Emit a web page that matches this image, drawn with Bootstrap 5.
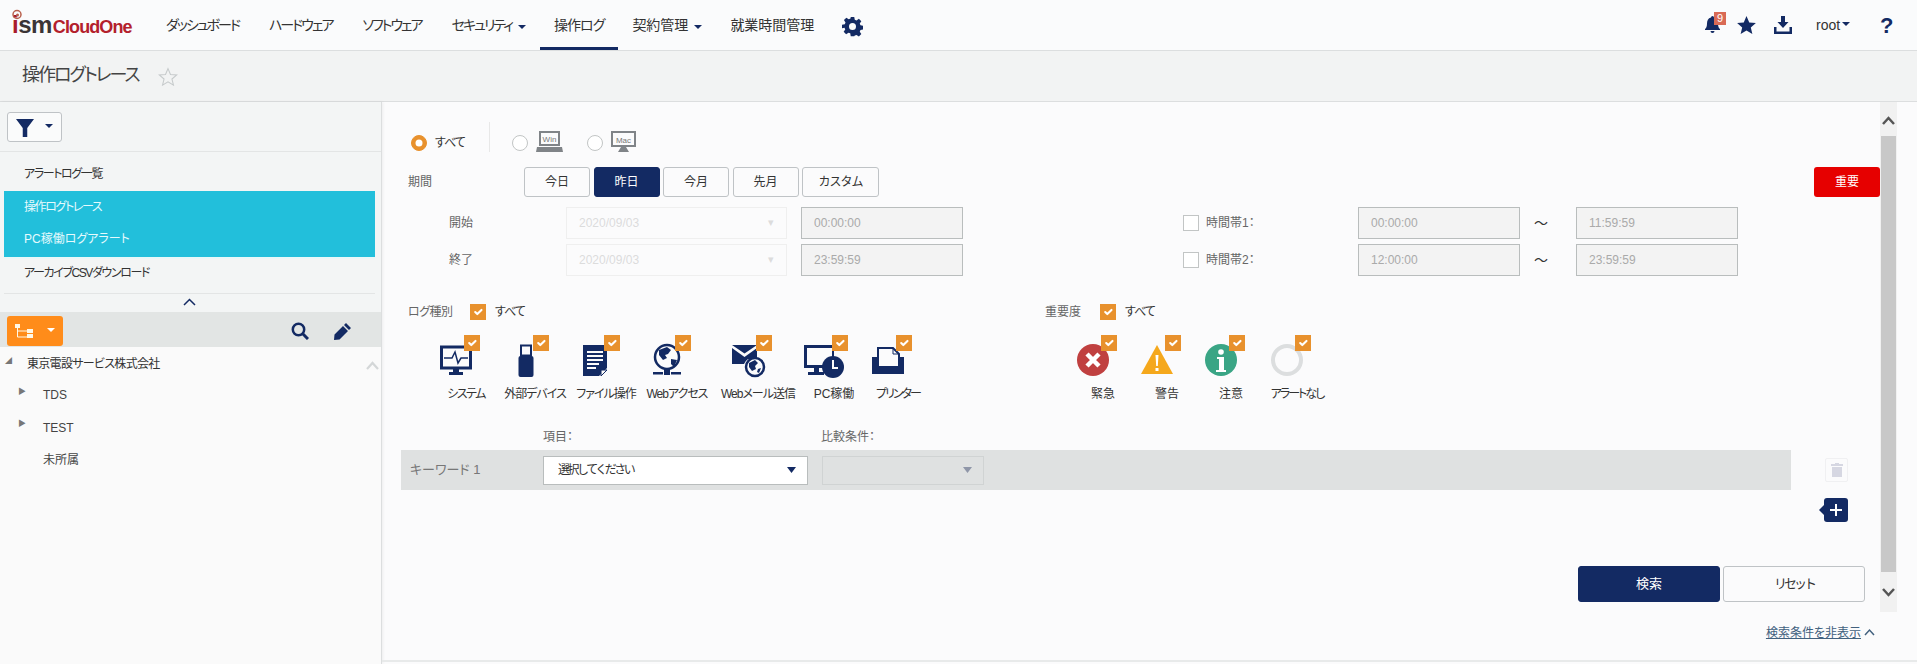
<!DOCTYPE html>
<html lang="ja">
<head>
    <meta charset="UTF-8">
    <meta name="viewport" content="width=device-width, initial-scale=1.0">
    <title>操作ログトレース</title>
    <link href="https://cdn.jsdelivr.net/npm/bootstrap@5.3.0/dist/css/bootstrap.min.css" rel="stylesheet">
    <style>
        body {
            font-family: "Liberation Sans", "Noto Sans CJK JP", sans-serif;
            font-feature-settings: "palt";
            font-size: 12px;
            color: #333;
            background: #fbfbfc;
            height: 664px;
            overflow: hidden;
        }
        /* カナの字詰め */
        .ls-05 { letter-spacing: -.5px; }
        .ls-1 { letter-spacing: -1px; }
        .ls-15 { letter-spacing: -1.5px; }
        .ls-2 { letter-spacing: -2px; }
        .ls-25 { letter-spacing: -2.5px; }
        .ls-3 { letter-spacing: -3px; }
        /* ヘッダー */
        .top-bar { height: 51px; padding: 0; background: #fafbfc; border-bottom: 1px solid #dcdedf; }
        .logo-box { width: 152px; flex: none; padding-left: 12px; height: 50px; position: relative; }
        .logo-ism { font-size: 24px; font-weight: 700; color: #3a3436; letter-spacing: -.5px; line-height: 50px; }
        .logo-ism b { color: #a81c2c; }
        .logo-cloud { font-size: 18px; font-weight: 700; color: #b3202c; line-height: 50px; margin: 2px 0 0 1px; letter-spacing: -.9px; }
        .logo-swirl { position: absolute; left: 12px; top: 9px; }
        .top-bar .navbar-nav .nav-link { height: 50px; padding: 0 14px; line-height: 50px; font-size: 14px; color: #333; }
        .top-bar .navbar-nav .nav-link.active { border-bottom: 3px solid #132a63; }
        .top-bar .navbar-nav .nav-link.ls-2 { margin-right: 2px; }
        .top-bar .navbar-nav .nav-link.dropdown-toggle { margin-right: 0; }
        .top-bar .nav-link.dropdown-toggle::after { color: #132a63; margin-left: 6px; vertical-align: .1em; }
        .right-tools { height: 50px; }
        .tool-bell { position: relative; width: 32px; display: block; }
        .bell-count { position: absolute; left: 9px; top: -4px; width: 12px; height: 13px; background: #d96a55; color: #fff; font-size: 11px; line-height: 13px; text-align: center; }
        .tool-star { margin-right: 18px; }
        .tool-down { margin-right: 24px; }
        .root-user { font-size: 14px; color: #333; width: 64px; }
        .root-user::after { color: #132a63; margin-left: 2px; }
        .help-mark { font-size: 22px; font-weight: 700; color: #132a63; width: 37px; }
        /* タイトル */
        .title-bar { height: 51px; background: #f2f3f3; border-bottom: 1px solid #dcdedf; padding-left: 22px; }
        .title-bar h1 { font-size: 18px; font-weight: 400; margin: 0 19px 0 0; color: #444; letter-spacing: -2px; }
        /* 左メニュー */
        .side-col { width: 382px; flex: none; height: 562px; background: #fafafa; border-right: 1px solid #dcdedf; box-shadow: 1px 0 3px rgba(0,0,0,.06); }
        .side-top { background: #f3f5f5; height: 210px; padding: 0 6px 0 4px; }
        .filter-row { height: 50px; border-bottom: 1px solid #e3e5e5; margin-left: -4px; margin-right: -6px; padding: 10px 0 0 7px; }
        .filter-btn { width: 55px; height: 30px; padding: 0; background: #fafbfb; border: 1px solid #bfc3c6; border-radius: 3px; color: #132a63; }
        .side-list { padding-top: 6px; }
        .side-list .list-group-item { height: 33.5px; line-height: 33.5px; padding: 0 0 0 20px; border: 0; background: transparent; font-size: 12px; color: #333; letter-spacing: -1.4px; }
        .side-list .list-group-item.active { background: #22bfdb; color: #e6fafd; }
        .side-list .list-group-item.pc-item { letter-spacing: 0; box-shadow: 0 2px 0 #e8f8f8; }
        .collapse-row { height: 17px; border-top: 1px solid #e3e5e5; margin-top: 3px; text-align: center; line-height: 14px; }
        .tree-tools { height: 35px; background: #e2e5e4; padding: 3px 30px 0 7px; }
        .org-btn { width: 56px; height: 30px; background: #ff8c1a; border: 0; border-radius: 3px; padding: 0; color: #fff; }
        .org-btn.dropdown-toggle::after { margin-left: 10px; }
        .filter-btn.dropdown-toggle::after { margin-left: 7px; }
        .tool-find { margin-right: 25px; }
        .tree-box { position: relative; padding-top: 1px; }
        .tree-row { height: 32.5px; font-size: 12px; color: #444; display: flex; align-items: center; }
        .tree-arrow { flex: none; color: #777; font-size: 8px; line-height: 1; margin-top: -7px; }
        .tree-top { height: 31px; padding-left: 5px; color: #333; letter-spacing: -.7px; }
        .tree-top .tree-arrow { width: 22px; font-size: 7px; }
        .tree-sub { padding-left: 18px; }
        .tree-sub .tree-arrow { width: 25px; }
        .tree-up { position: absolute; right: 2px; top: 14px; }
        /* 検索フォーム */
        .form-wrap { padding-right: 20px; }
        .form-side { flex: 1 1 auto; height: 510px; padding: 20px 0 0 26px; min-width: 0; }
        .scroll-col { width: 17px; flex: none; height: 510px; background: #f1f1f1; }
        .scroll-btn { height: 34px; padding-top: 14px; }
        .scroll-btn.down { height: 40px; padding-top: 16px; }
        .scroll-thumb { height: 436px; background: #c8c8c8; margin: 0 1px; }
        .radio-row { height: 30px; }
        .radio-row .form-check-input { margin-bottom: 1px; }
        .radio-row .radio-all { margin-left: 3px; }
        .form-check-input { margin: 0; flex: none; width: 16px; height: 16px; }
        .form-check-input:checked { background-color: #e8912d; border-color: #e8912d; }
        .form-check-input[type=checkbox] { border-radius: 0; }
        .check-off { border-color: #c2c5c5; }
        .radio-sep { width: 1px; height: 30px; background: #e8e8e8; margin: 0 22px 0 24px; }
        .win-mark { margin-left: 8px; margin-right: 24px; }
        .mac-mark { margin-left: 8px; }
        .period-row { margin-top: 15px; height: 30px; }
        .row-label { color: #666; font-size: 12px; }
        .w-period { width: 116px; }
        .period-btn { width: 66px; height: 30px; padding: 0; font-size: 12px; background: #fbfbfc; color: #333; border: 1px solid #bfc3c6; border-radius: 3px; margin-right: 3.5px; }
        .period-btn.wide { width: 77px; }
        .period-btn.on, .period-btn.on:hover { background: #132a63; color: #fff; border-color: #132a63; }
        .imp-btn { width: 66px; height: 30px; padding: 0; font-size: 12px; background: #e60000; border: 0; color: #fff; border-radius: 3px; margin-left: auto; }
        .date-row { height: 32px; margin-top: 10px; }
        .date-row.second { margin-top: 5px; }
        .date-left { width: 775px; flex: none; padding-left: 41px; }
        .w-range { width: 117px; }
        .date-box { width: 221px; height: 32px; flex: none; border: 1px solid #efefef; color: #dcdcdc; padding: 0 12px; margin-right: 14px; font-size: 12px; background: transparent; }
        .time-box { width: 162px; height: 32px; flex: none; border: 1px solid #b9bdbd; border-radius: 0; background: #f3f3f3; color: #aaa; font-size: 12px; padding: 0 12px; }
        .time-box:disabled { background: #f3f3f3; color: #aaa; }
        .w-band { width: 159px; padding-left: 7px; }
        .tilde { width: 56px; padding-left: 14px; font-size: 14px; }
        .kind-head { margin-top: 28px; height: 16px; }
        .kind-left { width: 637px; flex: none; }
        .w-kind { width: 62px; }
        .w-sev { width: 55px; }
        .all-label { margin-left: 9px; }
        .icon-row { margin-top: 24px; }
        .icon-left { width: 663px; flex: none; padding-left: 28px; }
        .pick { text-align: center; }
        .pick-icon { position: relative; width: 32px; height: 32px; margin: 0 auto; left: -10px; }
        .pick-icon svg { display: block; overflow: visible; }
        .pick-icon svg.pc-mark { margin-left: -4px; }
        .pick-icon .form-check-input { position: absolute; left: 24px; top: -9px; }
        .pick-name { margin-top: 9px; line-height: 18px; white-space: nowrap; color: #333; }
        .w60 { width: 60px; } .w78 { width: 78px; } .w64 { width: 64px; } .w84 { width: 84px; } .w68 { width: 68px; }
        .word-head { margin-top: 25px; height: 18px; line-height: 18px; padding-left: 135px; color: #666; }
        .word-head span:first-child { width: 278px; }
        .word-line { margin-top: 4px; margin-left: -7px; }
        .word-band { width: 1390px; height: 40px; background: #dfe1e1; padding-left: 9px; color: #777; font-size: 13px; }
        .word-name { width: 133px; }
        .pick-select { width: 265px; height: 29px; padding: 0 14px; border: 1px solid #b9bdbd; border-radius: 0; font-size: 12px; letter-spacing: -2.5px; color: #333; background-color: #fff; background-size: 9px 6px; background-position: right 11px center; background-repeat: no-repeat; background-image: url("data:image/svg+xml,%3csvg xmlns='http://www.w3.org/2000/svg' viewBox='0 0 9 6'%3e%3cpath fill='%23132a63' d='M0 0h9L4.500 6z'/%3e%3c/svg%3e"); margin-right: 14px; }
        .pick-select.off { width: 162px; background-color: #dfe1e1; border-color: #d0d3d3; background-image: url("data:image/svg+xml,%3csvg xmlns='http://www.w3.org/2000/svg' viewBox='0 0 9 6'%3e%3cpath fill='%238f96a8' d='M0 0h9L4.500 6z'/%3e%3c/svg%3e"); }
        .trash-btn { width: 23px; height: 24px; margin-left: 34px; padding: 0; background: #fbfbfc; border: 1px solid #f0f0f2; border-radius: 2px; }
        .add-line { margin-top: 8px; padding-right: 32px; }
        .add-btn { position: relative; width: 24px; height: 24px; padding: 0; background: #132a63; border: 0; border-radius: 3px; }
        .add-btn::before { content: ""; position: absolute; left: -5px; top: 7px; border: 5px solid transparent; border-left: 0; border-right-color: #132a63; }
        .submit-line { margin-top: 44px; padding-right: 15px; gap: 3px; }
        .submit-btn { width: 142px; height: 36px; padding: 0; font-size: 13px; border-radius: 3px; }
        .submit-btn.go { background: #132a63; color: #fff; border: 1px solid #132a63; }
        .submit-btn.reset { background: #fbfbfc; color: #333; border: 1px solid #bfc3c6; }
        .hide-line { height: 50px; padding: 12px 42px 0 0; border-bottom: 2px solid #e8eaea; }
        .hide-line a { color: #41607e; font-size: 12px; line-height: 18px; }
        .hide-line svg { margin-left: 3px; }
    </style>
</head>
<body>

    <!-- ヘッダー -->
    <nav class="navbar navbar-expand top-bar">
        <div class="logo-box d-flex">
            <svg class="logo-swirl" width="12" height="11" viewBox="0 0 12 11"><circle cx="5" cy="5.500" r="4" fill="none" stroke="#b8604c" stroke-width="1.500"/><circle cx="5.500" cy="6" r="1.500" fill="#b8604c"/></svg>
            <span class="logo-ism"><b>i</b>sm</span><span class="logo-cloud">CloudOne</span>
        </div>
        <ul class="navbar-nav">
            <li class="nav-item"><a class="nav-link ls-2" href="#">ダッシュボード</a></li>
            <li class="nav-item"><a class="nav-link ls-2" href="#">ハードウェア</a></li>
            <li class="nav-item"><a class="nav-link ls-2" href="#">ソフトウェア</a></li>
            <li class="nav-item"><a class="nav-link ls-2 dropdown-toggle" href="#">セキュリティ</a></li>
            <li class="nav-item"><a class="nav-link ls-1 active" href="#">操作ログ</a></li>
            <li class="nav-item"><a class="nav-link dropdown-toggle" href="#">契約管理</a></li>
            <li class="nav-item"><a class="nav-link" href="#">就業時間管理</a></li>
            <li class="nav-item">
                <a class="nav-link" href="#" aria-label="設定">
                    <svg width="21" height="21" viewBox="0 0 24 24" fill="#132a63"><path d="M10 1h4l.6 3.200 2 .8 2.700-1.800 2.800 2.800-1.800 2.700.8 2 3.200.6v4l-3.200.6-.8 2 1.800 2.700-2.800 2.800-2.700-1.800-2 .8L14 23h-4l-.6-3.200-2-.8-2.700 1.800-2.800-2.800 1.800-2.700-.8-2L0 14v-4l3.200-.6.8-2-1.800-2.700 2.800-2.800 2.700 1.800 2-.8zM12 8a4 4 0 1 0 0 8 4 4 0 0 0 0-8z" fill-rule="evenodd"/></svg>
                </a>
            </li>
        </ul>
        <div class="right-tools d-flex align-items-center ms-auto">
            <span class="tool-bell">
                <svg width="15" height="18" viewBox="0 0 15 18" fill="#132a63"><path d="M7.500 0a1.500 1.500 0 0 1 1.500 1.500c3 .7 4 3.200 4 6 0 3 .7 4.500 2 5.500v1H0v-1c1.300-1 2-2.500 2-5.500 0-2.800 1-5.300 4-6A1.500 1.500 0 0 1 7.500 0zM5.500 15h4a2 2 0 0 1-4 0z"/></svg>
                <span class="bell-count">9</span>
            </span>
            <svg class="tool-star" width="19" height="18" viewBox="0 0 24 23" fill="#132a63"><path d="M12 0l3.500 8.300 8.500.7-6.500 5.700 2 8.300L12 18.600 4.500 23l2-8.300L0 9l8.500-.7z"/></svg>
            <svg class="tool-down" width="18" height="18" viewBox="0 0 18 18" fill="#132a63"><path d="M7 0h4v6h3.500L9 12 3.500 6H7zM0 11h2.500v4.500h13V11H18v7H0z"/></svg>
            <span class="root-user dropdown-toggle">root</span>
            <span class="help-mark">?</span>
        </div>
    </nav>

    <!-- タイトル -->
    <div class="title-bar d-flex align-items-center">
        <h1>操作ログトレース</h1>
        <svg width="20" height="19" viewBox="0 0 24 23" fill="none" stroke="#c6cacb" stroke-width="1.300"><path d="M12 2l3 7 7.500.6-5.700 5 1.800 7.300L12 18l-6.600 3.900 1.800-7.300-5.700-5L9 9z"/></svg>
    </div>

    <div class="d-flex">
        <!-- 左メニュー -->
        <aside class="side-col">
            <div class="side-top">
                <div class="filter-row">
                    <button class="btn filter-btn dropdown-toggle" type="button" aria-label="フィルター">
                        <svg width="18" height="18" viewBox="0 0 16 16" fill="#132a63"><path d="M0 0h16L10 8v8H6V8z"/></svg>
                    </button>
                </div>
                <div class="list-group side-list">
                    <a class="list-group-item" href="#">アラートログ一覧</a>
                    <a class="list-group-item active" href="#">操作ログトレース</a>
                    <a class="list-group-item active pc-item" href="#">PC稼働ログアラート</a>
                    <a class="list-group-item" href="#">アーカイブCSVダウンロード</a>
                </div>
                <div class="collapse-row">
                    <svg width="13" height="8" viewBox="0 0 13 8" fill="none" stroke="#132a63" stroke-width="1.500"><path d="M1 7l5.500-5.500L12 7"/></svg>
                </div>
            </div>
            <div class="tree-tools d-flex align-items-center">
                <button class="btn org-btn dropdown-toggle" type="button" aria-label="組織">
                    <svg width="18" height="15" viewBox="0 0 18 15" fill="#fff8e8"><path d="M0 0h5v4H0zM12 5h6v4h-6zM12 10h6v4h-6z"/><path d="M2.500 4v9H12M2.500 7H12" fill="none" stroke="#fff8e8"/></svg>
                </button>
                <svg class="ms-auto tool-find" width="18" height="18" viewBox="0 0 18 18" fill="none" stroke="#132a63" stroke-width="2.500"><circle cx="7.500" cy="7.500" r="5.700"/><path d="M12 12l5 5" stroke-width="3"/></svg>
                <svg width="17" height="17" viewBox="0 0 17 17" fill="#132a63"><path d="M12 0l5 5-2 2-5-5zM9 3l5 5-8.500 8.500L0 17l.5-5.500z"/></svg>
            </div>
            <div class="tree-box">
                <div class="tree-row tree-top"><span class="tree-arrow">◢</span>東京電設サービス株式会社</div>
                <div class="tree-row tree-sub"><span class="tree-arrow">▶</span><span>TDS</span></div>
                <div class="tree-row tree-sub"><span class="tree-arrow">▶</span><span>TEST</span></div>
                <div class="tree-row tree-sub"><span class="tree-arrow"></span><span>未所属</span></div>
                <svg class="tree-up" width="13" height="9" viewBox="0 0 13 9" fill="none" stroke="#d4d7d8" stroke-width="2.200"><path d="M1 8l5.500-6L12 8"/></svg>
            </div>
        </aside>

        <!-- 検索フォーム -->
        <main class="flex-grow-1">
            <div class="d-flex form-wrap">
                <form class="form-side">
                    <div class="radio-row d-flex align-items-end">
                        <input class="form-check-input radio-all" type="radio" name="os" checked>
                        <span class="ms-2 ls-1">すべて</span>
                        <span class="radio-sep"></span>
                        <input class="form-check-input check-off" type="radio" name="os">
                        <svg class="win-mark" width="27" height="21" viewBox="0 0 27 21"><path fill="#808488" d="M3 0h21v15H3zM1 16h25l1 5H0z"/><rect x="5" y="2" width="17" height="11" fill="#fbfbfc"/><text x="13.500" y="11" text-anchor="middle" font-size="8" fill="#777">Win</text></svg>
                        <input class="form-check-input check-off" type="radio" name="os">
                        <svg class="mac-mark" width="25" height="21" viewBox="0 0 25 21"><path fill="#808488" d="M0 0h25v16H0zM10 16h5l3 5H7z"/><rect x="2" y="2" width="21" height="12" fill="#fbfbfc"/><text x="12.500" y="11.500" text-anchor="middle" font-size="8" fill="#777">Mac</text></svg>
                    </div>

                    <div class="period-row d-flex align-items-center">
                        <span class="row-label w-period">期間</span>
                        <button type="button" class="btn period-btn">今日</button>
                        <button type="button" class="btn period-btn on">昨日</button>
                        <button type="button" class="btn period-btn">今月</button>
                        <button type="button" class="btn period-btn">先月</button>
                        <button type="button" class="btn period-btn wide ls-1">カスタム</button>
                        <button type="button" class="btn imp-btn">重要</button>
                    </div>

                    <div class="date-row d-flex align-items-center">
                        <div class="date-left d-flex align-items-center">
                            <span class="row-label w-range">開始</span>
                            <div class="date-box d-flex align-items-center justify-content-between"><span>2020/09/03</span><small>▾</small></div>
                            <input class="form-control time-box" value="00:00:00" disabled>
                        </div>
                        <input class="form-check-input check-off" type="checkbox">
                        <span class="row-label w-band">時間帯1：</span>
                        <input class="form-control time-box" value="00:00:00" disabled>
                        <span class="tilde">～</span>
                        <input class="form-control time-box" value="11:59:59" disabled>
                    </div>
                    <div class="date-row second d-flex align-items-center">
                        <div class="date-left d-flex align-items-center">
                            <span class="row-label w-range">終了</span>
                            <div class="date-box d-flex align-items-center justify-content-between"><span>2020/09/03</span><small>▾</small></div>
                            <input class="form-control time-box" value="23:59:59" disabled>
                        </div>
                        <input class="form-check-input check-off" type="checkbox">
                        <span class="row-label w-band">時間帯2：</span>
                        <input class="form-control time-box" value="12:00:00" disabled>
                        <span class="tilde">～</span>
                        <input class="form-control time-box" value="23:59:59" disabled>
                    </div>

                    <div class="kind-head d-flex align-items-center">
                        <div class="kind-left d-flex align-items-center">
                            <span class="row-label w-kind ls-05">ログ種別</span>
                            <input class="form-check-input" type="checkbox" checked>
                            <span class="all-label ls-1">すべて</span>
                        </div>
                        <span class="row-label w-sev">重要度</span>
                        <input class="form-check-input" type="checkbox" checked>
                        <span class="all-label ls-1">すべて</span>
                    </div>

                    <div class="icon-row d-flex">
                        <div class="icon-left d-flex">
                            <div class="pick w60">
                                <div class="pick-icon">
                                    <svg width="32" height="32" viewBox="0 0 32 32"><rect x="1.500" y="3" width="29" height="21" fill="none" stroke="#132a63" stroke-width="3"/><path d="M4 14h8l3-6 3 11 3-5h7" fill="none" stroke="#132a63" stroke-width="1.500"/><path d="M13 24h6v4h4v3H9v-3h4z" fill="#132a63"/></svg>
                                    <input class="form-check-input" type="checkbox" checked>
                                </div>
                                <div class="pick-name ls-15">システム</div>
                            </div>
                            <div class="pick w78">
                                <div class="pick-icon">
                                    <svg width="32" height="32" viewBox="0 0 32 32"><rect x="9.500" y="12" width="15" height="21" rx="2" fill="#132a63"/><rect x="12" y="1.500" width="10" height="10" fill="none" stroke="#132a63" stroke-width="2"/></svg>
                                    <input class="form-check-input" type="checkbox" checked>
                                </div>
                                <div class="pick-name ls-1">外部デバイス</div>
                            </div>
                            <div class="pick w64">
                                <div class="pick-icon">
                                    <svg width="32" height="32" viewBox="0 0 32 32"><path d="M3 1h24v23l-8 8H3z" fill="#132a63"/><path d="M7 8h16M7 12h16M7 16h16M7 20h12M7 24h9" stroke="#fbfbfc" stroke-width="2"/><path d="M21 32l6-6h-6z" fill="#fbfbfc" stroke="#132a63"/></svg>
                                    <input class="form-check-input" type="checkbox" checked>
                                </div>
                                <div class="pick-name ls-1">ファイル操作</div>
                            </div>
                            <div class="pick w78">
                                <div class="pick-icon">
                                    <svg width="32" height="32" viewBox="0 0 32 32"><circle cx="16" cy="13" r="12" fill="#fbfbfc" stroke="#132a63" stroke-width="2.500"/><path d="M8 6l8-3 4 3-3 4-3 1 2 3-4 2-4-5zM20 15l6 1-3 7-3-3z" fill="#132a63"/><path d="M2 28h10v2.500H2zM20 28h10v2.500H20zM13 25h6v6h-6z" fill="#132a63"/></svg>
                                    <input class="form-check-input" type="checkbox" checked>
                                </div>
                                <div class="pick-name ls-1">Webアクセス</div>
                            </div>
                            <div class="pick w84">
                                <div class="pick-icon">
                                    <svg width="34" height="34" viewBox="0 0 34 34"><path d="M0 1h25l-12.500 8.500zM0 4l12.500 9L25 4v11h-9a11 11 0 0 0-4 5H0z" fill="#132a63"/><circle cx="23" cy="23" r="9" fill="#fbfbfc" stroke="#132a63" stroke-width="2.500"/><path d="M17 19l6-3 3 3-3 3 1 3-4 2-3-4zM26 25l3-1-2 5-2-1z" fill="#132a63"/></svg>
                                    <input class="form-check-input" type="checkbox" checked>
                                </div>
                                <div class="pick-name ls-1">Webメール送信</div>
                            </div>
                            <div class="pick w68">
                                <div class="pick-icon">
                                    <svg class="pc-mark" width="40" height="34" viewBox="0 0 40 34"><path d="M0 1h29v3H3v17h20v3H15v4h5v3H4v-3h6v-4H0z" fill="#132a63"/><circle cx="29" cy="23" r="11" fill="#132a63"/><path d="M29 16v8h5" fill="none" stroke="#fbfbfc" stroke-width="2"/><path d="M28 4h2v9h-2z" fill="#132a63"/></svg>
                                    <input class="form-check-input" type="checkbox" checked>
                                </div>
                                <div class="pick-name">PC稼働</div>
                            </div>
                            <div class="pick w60">
                                <div class="pick-icon">
                                    <svg width="32" height="32" viewBox="0 0 32 32"><path d="M0 13h32v17H0z" fill="#132a63"/><path d="M6 4h15l6 6v13H6z" fill="#fbfbfc" stroke="#132a63" stroke-width="2"/><path d="M21 4v6h6" fill="none" stroke="#132a63"/></svg>
                                    <input class="form-check-input" type="checkbox" checked>
                                </div>
                                <div class="pick-name ls-2">プリンター</div>
                            </div>
                        </div>
                        <div class="d-flex">
                            <div class="pick w64">
                                <div class="pick-icon">
                                    <svg width="32" height="32" viewBox="0 0 32 32"><circle cx="16" cy="16" r="16" fill="#c04040"/><path d="M10 10l12 12M22 10L10 22" stroke="#fff" stroke-width="4.500"/></svg>
                                    <input class="form-check-input" type="checkbox" checked>
                                </div>
                                <div class="pick-name">緊急</div>
                            </div>
                            <div class="pick w64">
                                <div class="pick-icon">
                                    <svg width="32" height="32" viewBox="0 0 32 32"><path d="M16 1l16 29H0z" fill="#f5a81c"/><path d="M14.500 11h3l-.7 11h-1.600zM14.500 24h3v3h-3z" fill="#fff"/></svg>
                                    <input class="form-check-input" type="checkbox" checked>
                                </div>
                                <div class="pick-name">警告</div>
                            </div>
                            <div class="pick w64">
                                <div class="pick-icon">
                                    <svg width="32" height="32" viewBox="0 0 32 32"><circle cx="16" cy="16" r="16" fill="#3aa585"/><circle cx="16" cy="8" r="2.800" fill="#fff"/><path d="M12 13h7v13h2v2H11v-2h3V15h-2z" fill="#fff"/></svg>
                                    <input class="form-check-input" type="checkbox" checked>
                                </div>
                                <div class="pick-name">注意</div>
                            </div>
                            <div class="pick w68">
                                <div class="pick-icon">
                                    <svg width="32" height="32" viewBox="0 0 32 32"><circle cx="16" cy="16" r="14" fill="none" stroke="#dcdedf" stroke-width="4"/></svg>
                                    <input class="form-check-input" type="checkbox" checked>
                                </div>
                                <div class="pick-name ls-2">アラートなし</div>
                            </div>
                        </div>
                    </div>

                    <div class="word-head d-flex">
                        <span>項目：</span>
                        <span>比較条件：</span>
                    </div>
                    <div class="word-line d-flex align-items-center">
                        <div class="word-band d-flex align-items-center">
                            <span class="word-name">キーワード 1</span>
                            <select class="form-select pick-select"><option>選択してください</option></select>
                            <select class="form-select pick-select off" disabled><option></option></select>
                        </div>
                        <button type="button" class="btn trash-btn d-flex align-items-center justify-content-center" aria-label="削除">
                            <svg width="12" height="14" viewBox="0 0 12 14" fill="#d6d7e2"><path d="M4 0h4v1h4v2H0V1h4zM1 4h10v10H1z"/></svg>
                        </button>
                    </div>
                    <div class="add-line d-flex justify-content-end">
                        <button type="button" class="btn add-btn d-flex align-items-center justify-content-center" aria-label="追加">
                            <svg width="12" height="12" viewBox="0 0 12 12" fill="#fff"><path d="M5 0h2v5h5v2H7v5H5V7H0V5h5z"/></svg>
                        </button>
                    </div>
                    <div class="submit-line d-flex justify-content-end">
                        <button type="button" class="btn submit-btn go">検索</button>
                        <button type="button" class="btn submit-btn reset ls-3">リセット</button>
                    </div>
                </form>

                <div class="scroll-col">
                    <div class="scroll-btn"><svg class="d-block mx-auto" width="13" height="9" viewBox="0 0 13 9" fill="none" stroke="#555" stroke-width="2.500"><path d="M1 8l5.500-6L12 8"/></svg></div>
                    <div class="scroll-thumb"></div>
                    <div class="scroll-btn down"><svg class="d-block mx-auto" width="13" height="9" viewBox="0 0 13 9" fill="none" stroke="#555" stroke-width="2.500"><path d="M1 1l5.500 6L12 1"/></svg></div>
                </div>
            </div>
            <div class="hide-line d-flex justify-content-end align-items-start">
                <a href="#">検索条件を非表示 </a>
                <svg class="mt-1" width="11" height="8" viewBox="0 0 11 8" fill="none" stroke="#41607e" stroke-width="1.500"><path d="M1 7l4.500-5L10 7"/></svg>
            </div>
        </main>
    </div>

<script src="https://cdn.jsdelivr.net/npm/bootstrap@5.3.0/dist/js/bootstrap.bundle.min.js"></script>
</body>
</html>
